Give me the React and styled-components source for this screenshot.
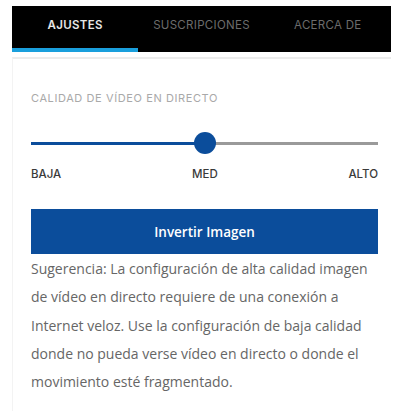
import React from 'react';
import styled, { createGlobalStyle } from 'styled-components';

const Global = createGlobalStyle`
  body {
    margin: 0;
    background: #fff;
    font-family: 'Open Sans', 'Liberation Sans', sans-serif;
  }
`;

const Page = styled.div`
  width: 379px;
  padding: 6px 0 0 12px;
`;

const Tabs = styled.nav`
  display: flex;
  height: 46px;
  background: #000;
`;

const Tab = styled.div`
  flex: 1;
  display: flex;
  align-items: center;
  justify-content: center;
  box-sizing: border-box;
  padding-bottom: 4px;
  border-bottom: 4px solid ${props => (props.active ? '#1a9fdc' : 'transparent')};
  color: ${props => (props.active ? '#e6e6e6' : '#6c6c6c')};
  font-family: 'Inter', 'Liberation Sans', sans-serif;
  font-size: 11.5px;
  font-weight: ${props => (props.active ? 600 : 400)};
  letter-spacing: 0.3px;
`;

const Panel = styled.section`
  margin-top: 5px;
  border-top: 2px solid #ececec;
  border-left: 1px solid #f3f3f3;
  padding: 0 13px 20px 18px;
`;

const Title = styled.div`
  margin-top: 31px;
  height: 16px;
  line-height: 16px;
  color: #a9a9a9;
  font-family: 'Inter', 'Liberation Sans', sans-serif;
  font-size: 11px;
  letter-spacing: 0.6px;
`;

const Slider = styled.div`
  position: relative;
  margin-top: 26px;
  height: 22px;
  display: flex;
  align-items: center;
`;

const Track = styled.div`
  flex: 1;
  height: 3px;
  background: linear-gradient(
    to right,
    #0b4d9b 0,
    #0b4d9b ${props => props.value}%,
    #9a9a9a ${props => props.value}%,
    #9a9a9a 100%
  );
`;

const Thumb = styled.div`
  position: absolute;
  top: 0;
  width: 22px;
  height: 22px;
  margin-left: -11px;
  border-radius: 50%;
  background: #0b4d9b;
`;

const Labels = styled.div`
  display: flex;
  justify-content: space-between;
  margin-top: 12px;
  height: 16px;
  line-height: 16px;
  color: #3a3a3a;
  font-family: 'Inter', 'Liberation Sans', sans-serif;
  font-size: 11.5px;
  font-weight: 500;
`;

const Button = styled.button`
  display: block;
  width: 100%;
  height: 45px;
  margin-top: 27px;
  border: 0;
  background: #0b4d9b;
  color: #fff;
  font-family: 'Open Sans', 'Liberation Sans', sans-serif;
  font-size: 13.5px;
  font-weight: 600;
`;

const Hint = styled.p`
  margin: 1px 0 0;
  color: #666;
  font-size: 14px;
  line-height: 28.3px;
`;

export default function App() {
  const value = 50;
  return (
    <Page>
      <Global />
      <Tabs>
        <Tab active>AJUSTES</Tab>
        <Tab>SUSCRIPCIONES</Tab>
        <Tab>ACERCA DE</Tab>
      </Tabs>
      <Panel>
        <Title>CALIDAD DE VÍDEO EN DIRECTO</Title>
        <Slider>
          <Track value={value} />
          <Thumb style={{ left: `${value}%` }} />
        </Slider>
        <Labels>
          <span>BAJA</span>
          <span>MED</span>
          <span>ALTO</span>
        </Labels>
        <Button>Invertir Imagen</Button>
        <Hint>
          Sugerencia: La configuración de alta calidad imagen de vídeo en directo requiere de una
          conexión a Internet veloz. Use la configuración de baja calidad donde no pueda verse
          vídeo en directo o donde el movimiento esté fragmentado.
        </Hint>
      </Panel>
    </Page>
  );
}
